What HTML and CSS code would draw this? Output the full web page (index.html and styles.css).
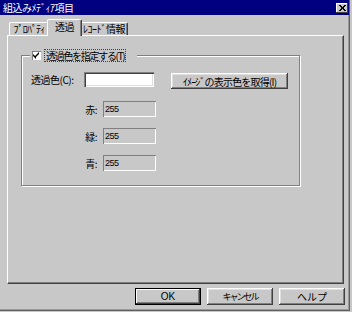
FILE: index.html
```html
<!DOCTYPE html>
<html lang="ja">
<head>
<meta charset="utf-8">
<link rel="stylesheet" href="styles.css">
</head>
<body>
<div class="window">
  <div class="titlebar">
    <span class="title">組込みﾒﾃﾞｨｱ項目</span>
    <span class="close"><svg width="7" height="6" viewBox="0 0 7 6"><path d="M0 0h2v1h1v1h1V1h1V0h2v1H6v1H5v2h1v1h1v1H5V5H4V4H3v1H2v1H0V5h1V4h1V2H1V1H0z" fill="#000"/></svg></span>
  </div>
  <div class="tabs">
    <div class="tab tab1">ﾌﾟﾛﾊﾟﾃｨ</div>
    <div class="tab tab2 active">透過</div>
    <div class="tab tab3">ﾚｺｰﾄﾞ情報</div>
  </div>
  <div class="panel">
    <div class="group">
      <div class="legend">
        <span class="checkbox"><svg width="7" height="7" viewBox="0 0 7 7"><path d="M6 0v2L3 5v2L0 4V2l2 2z" fill="#000"/></svg></span>
        <span class="focus">透過色を指定する(T)</span>
      </div>
      <div class="row1">
        <span class="lbl">透過色(C):</span>
        <div class="input"></div>
        <div class="btn wide">ｲﾒｰｼﾞの表示色を取得(I)</div>
      </div>
      <div class="rgb">
        <span class="rlbl">赤:</span><div class="field">255</div>
        <span class="rlbl">緑:</span><div class="field">255</div>
        <span class="rlbl">青:</span><div class="field">255</div>
      </div>
    </div>
  </div>
  <div class="buttons">
    <div class="btn dlg default">OK</div>
    <div class="btn dlg cancel">キャンセル</div>
    <div class="btn dlg">ヘルプ</div>
  </div>
</div>
</body>
</html>
```
FILE: styles.css
```css
html, body { margin: 0; padding: 0; }
body {
  background: #c8c8c8;
  font-family: "Noto Sans CJK JP", "Liberation Sans", sans-serif;
  font-size: 10px;
  letter-spacing: -0.5px;
  color: #000;
}
.window {
  width: 350px;
  height: 311px;
  box-sizing: border-box;
  border-right: 1px solid #606060;
  border-bottom: 1px solid #606060;
  box-shadow: inset -1px -1px #9a9a9a;
  display: flex;
  flex-direction: column;
}
.titlebar {
  height: 15px;
  width: 349px;
  background: #000080;
  color: #fff;
  display: flex;
  align-items: center;
  justify-content: space-between;
  padding: 0 1px 0 3px;
  box-sizing: border-box;
}
.title { line-height: 15px; }
.close {
  width: 12px;
  height: 10px;
  box-sizing: border-box;
  background: #c8c8c8;
  box-shadow: inset -1px -1px #404040, inset 1px 1px #fff;
  display: flex;
  align-items: center;
  justify-content: center;
}
.tabs {
  display: flex;
  align-items: flex-end;
  height: 16px;
  margin: 4px 0 0 9px;
  position: relative;
  z-index: 1;
}
.tab {
  height: 13px;
  box-sizing: border-box;
  border-top: 1px solid #fff;
  border-left: 1px solid #fff;
  border-right: 1px solid #404040;
  border-radius: 2px 2px 0 0;
  box-shadow: inset -1px 0 #808080;
  text-align: center;
  line-height: 12px;
  background: #c8c8c8;
}
.tab1 { width: 40px; letter-spacing: -0.8px; }
.tab3 { width: 48px; }
.tab2 { width: 35px; }
.active {
  height: 17px;
  margin: 0 -2px -1px;
  position: relative;
  z-index: 2;
  line-height: 14px;
}
.panel {
  margin-left: 7px;
  width: 337px;
  height: 249px;
  box-sizing: border-box;
  border-top: 1px solid #fff;
  border-left: 1px solid #fff;
  border-right: 1px solid #404040;
  border-bottom: 1px solid #404040;
  box-shadow: inset -1px -1px #808080;
  display: flex;
  flex-direction: column;
}
.group {
  margin: 19px 0 0 13px;
  width: 279px;
  height: 131px;
  box-sizing: border-box;
  border: 1px solid #808080;
  box-shadow: inset 1px 1px #fff, 1px 1px #fff;
  position: relative;
  padding: 16px 0 0 9px;
}
.legend {
  position: absolute;
  top: -7px;
  left: 8px;
  width: 107px;
  height: 13px;
  background: #c8c8c8;
  display: flex;
  align-items: center;
}
.checkbox {
  width: 9px;
  height: 9px;
  margin-left: 2px;
  box-sizing: border-box;
  background: #fff;
  box-shadow: inset 1px 1px #808080;
  display: flex;
  align-items: center;
  justify-content: center;
}
.focus {
  margin-left: 4px;
  padding: 0 1px;
  outline: 1px dotted #404040;
  line-height: 11px;
  letter-spacing: -1.3px;
}
.row1 {
  display: flex;
  align-items: flex-start;
  height: 17px;
}
.lbl { width: 53px; line-height: 15px; }
.input {
  width: 70px;
  height: 15px;
  box-sizing: border-box;
  background: #fff;
  box-shadow: inset 1px 1px #808080, inset 2px 2px #404040, inset -1px -1px #fff, inset -2px -2px #dfdfdf;
}
.btn {
  box-sizing: border-box;
  background: #c8c8c8;
  box-shadow: inset -1px -1px #404040, inset 1px 1px #fff, inset -2px -2px #808080, inset 2px 2px #dfdfdf;
  display: flex;
  align-items: center;
  justify-content: center;
}
.wide {
  width: 117px;
  height: 16px;
  margin: 1px 0 0 17px;
  letter-spacing: -0.8px;
}
.rgb {
  display: grid;
  grid-template-columns: 66px 53px;
  column-gap: 6px;
  row-gap: 11px;
  margin-top: 12px;
  align-items: center;
}
.rlbl { text-align: right; line-height: 15px; }
.field {
  height: 16px;
  box-sizing: border-box;
  box-shadow: inset 1px 1px #808080, inset -1px -1px #fff;
  padding-left: 2px;
  font-family: "Liberation Sans", sans-serif;
  font-size: 9px;
  line-height: 16px;
}
.buttons {
  display: flex;
  justify-content: flex-end;
  gap: 6px;
  margin-top: 4px;
  padding-right: 4px;
}
.dlg {
  width: 66px;
  height: 17px;
  letter-spacing: 0;
}
.default {
  box-shadow: inset 0 0 0 1px #000, inset -2px -2px #404040, inset 2px 2px #fff, inset -3px -3px #808080;
  font-family: "Liberation Sans", sans-serif;
  font-size: 10px;
}
.cancel { font-size: 9px; letter-spacing: -2px; }
```
